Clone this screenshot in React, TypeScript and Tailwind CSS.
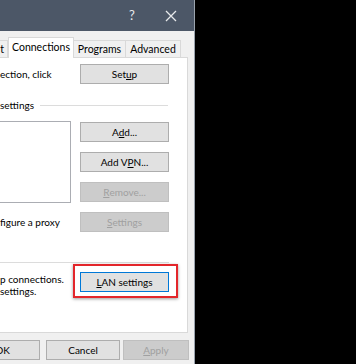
import React from "react";

const F = { fontFamily: 'Lato, "Noto Sans", sans-serif' };

function Btn({
  children,
  disabled,
  className = "",
}: {
  children: React.ReactNode;
  disabled?: boolean;
  className?: string;
}) {
  return (
    <div
      className={`flex items-center justify-center h-[20px] border text-[10px] leading-none ${
        disabled
          ? "border-[#bfbfbf] bg-[#cccccc] text-[#a0a0a0]"
          : "border-[#adadad] bg-[#e1e1e1] text-black"
      } ${className}`}
    >
      {children}
    </div>
  );
}

export default function App() {
  return (
    <div className="w-[356px] h-[364px] bg-black flex overflow-hidden" style={F}>
      <div className="w-[195px] h-full bg-[#f0f0f0] flex flex-col border-r border-[#9aa3ad]">
        {/* title bar */}
        <div className="h-[31px] bg-[#4c5767] flex items-center shrink-0">
          <span className="ml-[129px] text-[13px] text-[#e8eaec] leading-none">?</span>
          <svg className="ml-[30px]" width="12" height="12" viewBox="0 0 12 12">
            <path d="M1 1 L11 11 M11 1 L1 11" stroke="#e8eaec" strokeWidth="1.3" />
          </svg>
        </div>
        {/* tabs */}
        <div className="h-[26px] flex items-end shrink-0 relative z-10 text-[10.5px] text-black">
          <div className="h-[17px] w-[8px] border-t border-r border-[#d9d9d9] bg-[#f0f0f0] flex items-center justify-end pr-[3px] leading-none">
            t
          </div>
          <div className="h-[21px] w-[66px] bg-white border-t border-l border-r border-[#d9d9d9] flex items-center justify-center leading-none -mb-px pb-[2px]">
            Connections
          </div>
          <div className="h-[17px] w-[52px] border-t border-r border-[#d9d9d9] bg-[#f0f0f0] flex items-center justify-center leading-none">
            Programs
          </div>
          <div className="h-[17px] w-[55px] border-t border-r border-[#d9d9d9] bg-[#f0f0f0] flex items-center justify-center leading-none">
            Advanced
          </div>
        </div>
        {/* panel */}
        <div className="w-[188px] h-[276px] bg-white border border-l-0 border-[#d9d9d9] flex flex-col pt-[6px] text-[10px] text-black relative">
          <div className="flex items-center h-[20px]">
            <span className="w-[80px] leading-none">ection, click</span>
            <Btn className="w-[89px]">
              Set<u>u</u>p
            </Btn>
          </div>
          <div className="flex items-center h-[12px] mt-[15px] w-[168px]">
            <span className="leading-none">settings</span>
            <div className="flex-1 h-px bg-[#dcdcdc] ml-[6px]" />
          </div>
          <div className="flex mt-[10px]">
            <div className="w-[71px] h-[82px] border border-l-0 border-[#abadb3] bg-white" />
            <div className="flex flex-col gap-[10px] ml-[9px] mt-[1px]">
              <Btn className="w-[89px]">
                A<u>d</u>d...
              </Btn>
              <Btn className="w-[89px]">
                Add V<u>P</u>N...
              </Btn>
              <Btn className="w-[89px]" disabled>
                <u>R</u>emove...
              </Btn>
            </div>
          </div>
          <div className="flex items-center h-[20px] mt-[9px]">
            <span className="w-[80px] leading-none whitespace-nowrap">figure a proxy</span>
            <Btn className="w-[89px]" disabled>
              <u>S</u>ettings
            </Btn>
          </div>
          <div className="w-[169px] h-px bg-[#dcdcdc] mt-[30px]" />
          <div className="flex items-center mt-[9px] h-[20px]">
            <div className="w-[80px] flex flex-col leading-[12px] pt-[6px]">
              <span className="whitespace-nowrap">p connections.</span>
              <span>settings.</span>
            </div>
            <div className="relative">
              <div className="flex items-center justify-center w-[89px] h-[20px] border border-[#0078d7] bg-[#e1e1e1] text-[10px] leading-none">
                <u>L</u>AN settings
              </div>
              <div className="absolute left-[-7px] top-[-8px] w-[105px] h-[34px] border-2 border-[#e3262b] shadow-[0_1px_3px_rgba(0,0,0,0.4)]" />
            </div>
          </div>
        </div>
        {/* bottom buttons */}
        <div className="flex mt-[7px] h-[20px]">
          <Btn className="w-[40px] border-l-0 justify-end pr-[29px]">OK</Btn>
          <Btn className="w-[74px] ml-[6px]">Cancel</Btn>
          <Btn className="w-[66px] ml-[3px]" disabled>
            <u>A</u>pply
          </Btn>
        </div>
      </div>
    </div>
  );
}
